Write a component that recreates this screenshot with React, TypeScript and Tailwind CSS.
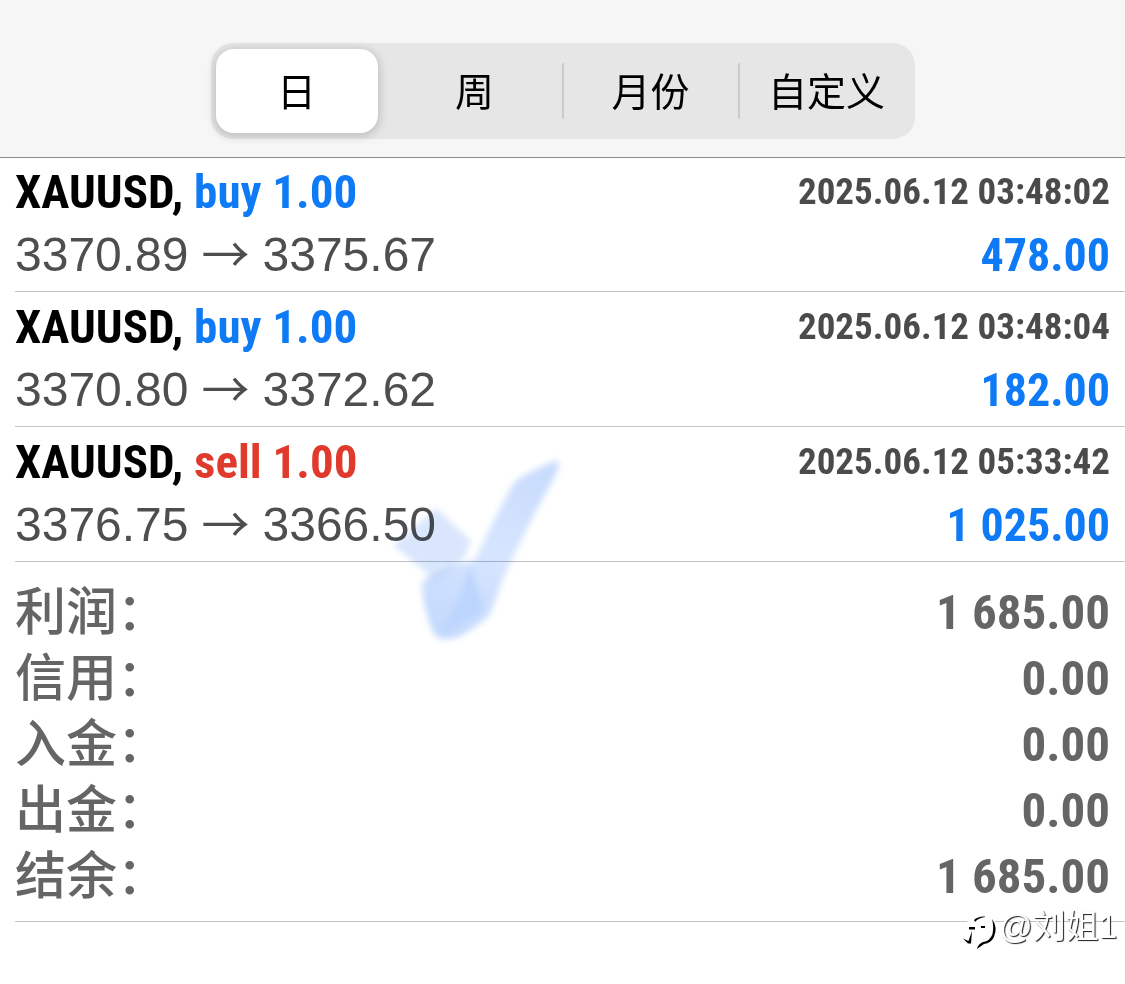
import { useState } from "react";

const CONDENSED = "font-['Roboto_Condensed','Liberation_Sans_Narrow','Liberation_Sans',sans-serif]";

const periods = ["日", "周", "月份", "自定义"];

const deals = [
  { symbol: "XAUUSD", side: "buy", volume: "1.00", open: "3370.89", close: "3375.67", time: "2025.06.12 03:48:02", profit: "478.00" },
  { symbol: "XAUUSD", side: "buy", volume: "1.00", open: "3370.80", close: "3372.62", time: "2025.06.12 03:48:04", profit: "182.00" },
  { symbol: "XAUUSD", side: "sell", volume: "1.00", open: "3376.75", close: "3366.50", time: "2025.06.12 05:33:42", profit: "1 025.00" },
];

const totals = [
  { label: "利润", value: "1 685.00" },
  { label: "信用", value: "0.00" },
  { label: "入金", value: "0.00" },
  { label: "出金", value: "0.00" },
  { label: "结余", value: "1 685.00" },
];

function PeriodPicker() {
  const [active, setActive] = useState(0);
  return (
    <div className="grid w-[704px] max-w-full grid-cols-4 rounded-[22px] bg-[#e6e6e7] font-['Noto_Sans_CJK_SC',sans-serif]">
      {periods.map((name, i) => (
        <div key={name} className="relative flex h-24 py-[6px] pr-[9px] pl-[5px]">
          {i > 1 && <span className="absolute top-5 left-[-1px] h-14 w-[2px] rounded-full bg-[#cbcbcd]" />}
          <button
            type="button"
            aria-pressed={i === active}
            onClick={() => setActive(i)}
            className={
              "flex-1 rounded-[18px] pb-1 text-[39px] leading-none whitespace-nowrap text-black " +
              (i === active ? "bg-white shadow-[0_2px_8px_2px_rgba(0,0,0,0.16)]" : "pl-1")
            }
          >
            {name}
          </button>
        </div>
      ))}
    </div>
  );
}

function Deal({ deal }: { deal: (typeof deals)[number] }) {
  return (
    <li className="ml-[15px] border-b border-[#c2c2c4] pt-[2px] pr-[15px] pb-1">
      <div className={"flex h-16 items-center justify-between font-bold " + CONDENSED}>
        <span className="text-[47px] leading-none text-black">
          {deal.symbol},{" "}
          <span className={deal.side === "buy" ? "text-[#0f7af5]" : "text-[#e03a2d]"}>
            {deal.side} {deal.volume}
          </span>
        </span>
        <time className="text-[37px] leading-none text-[#4b4b4e]">{deal.time}</time>
      </div>
      <div className="flex h-16 items-center justify-between">
        <div className="flex h-12 items-center gap-[13px] text-[48px] leading-none text-[#4e4e50]">
          <span>{deal.open}</span>
          <span className="pb-2 font-['Noto_Sans_CJK_SC',sans-serif]">→</span>
          <span>{deal.close}</span>
        </div>
        <span className={"text-[46px] leading-none font-bold text-[#0f7af5] " + CONDENSED}>{deal.profit}</span>
      </div>
    </li>
  );
}

function CheckMark() {
  return (
    <svg
      className="pointer-events-none absolute top-[294px] left-[380px] h-[200px] w-[190px] mix-blend-multiply"
      viewBox="380 452 190 200"
      aria-hidden="true"
    >
      <defs>
        <filter id="soft" x="-10%" y="-10%" width="120%" height="120%">
          <feGaussianBlur stdDeviation="3" />
        </filter>
        <linearGradient id="stem" x1="540" y1="470" x2="450" y2="640" gradientUnits="userSpaceOnUse">
          <stop offset="0" stopColor="#c9dcfd" />
          <stop offset="0.5" stopColor="#d6e5ff" />
          <stop offset="1" stopColor="#c3d9fd" />
        </linearGradient>
      </defs>
      <g filter="url(#soft)">
        <path d="M436 508 L471 541 L464 558 L432 577 L393 545 L412 530Z" fill="#d9e6fd" />
        <path d="M557 460 Q561 464 556 474 L528 526 L505 574 L491 612 Q486 622 458 637 Q438 643 433 632 Q422 606 422 582 L458 564 L475 560 L489 530 L513 484 Q522 474 557 460Z" fill="url(#stem)" />
        <path d="M424 579 L459 562 L436 582Z" fill="#c2d7fb" />
        <path d="M470 566 L484 610 L442 634 L462 590Z" fill="#bcd5fd" />
      </g>
    </svg>
  );
}

function Watermark() {
  return (
    <div className="absolute right-[8px] bottom-[37px] flex items-center gap-[2px] text-[33px] leading-[40px] text-white">
      <svg className="h-[40px] w-[38px] overflow-visible" viewBox="958 908 38 40" aria-hidden="true">
        <path
          d="M960 939 L966 938 L969 928 L965 927 L970 920 Q975 914 984 915 Q996 920 993 934 Q990 942 978 947 L980 941 Q986 938 986 931 Q982 922 975 928 L971 938 L967 944Z"
          fill="#fff"
          stroke="#fff"
          strokeWidth="3"
        />
        <path
          d="M973 921 Q977 917 984 917.500 L984 918 Q977 919 974 923Z M968 928 h6 v2.500 h-6Z M980 927 h4 v2 h-4Z M962 939.500 L967.500 942 L971 932 L970 944.500 L967 944.500Z M991 920 Q997 928 993 938 Q990 944 983 945 L976 950 Q977 945 982 943 Q989 942 991.500 935 Q993 928 991 920Z"
          fill="#000"
        />
      </svg>
      <span className="[text-shadow:1px_1px_1px_rgba(0,0,0,0.9)]">@刘姐1</span>
    </div>
  );
}

export default function App() {
  return (
    <div className="flex min-h-screen flex-col bg-white font-['Liberation_Sans','Noto_Sans_CJK_SC',sans-serif]">
      <header className="flex justify-center border-b border-[#8c8c8e] bg-[#f6f6f6] pt-[43px] pb-[18px]">
        <PeriodPicker />
      </header>
      <main className="relative flex-1">
        <ul className="-mt-px">
          {deals.map((deal) => (
            <Deal key={deal.time} deal={deal} />
          ))}
        </ul>
        <dl className="ml-[15px] border-b border-[#c2c2c4] pt-[17px] pr-[15px] pb-3 text-[#656565]">
          {totals.map((t) => (
            <div key={t.label} className="flex h-[66px] items-center justify-between">
              <dt className="text-[51px] leading-none font-medium">{t.label}：</dt>
              <dd className={"text-[49px] leading-none font-bold " + CONDENSED}>{t.value}</dd>
            </div>
          ))}
        </dl>
        <CheckMark />
        <Watermark />
      </main>
    </div>
  );
}
